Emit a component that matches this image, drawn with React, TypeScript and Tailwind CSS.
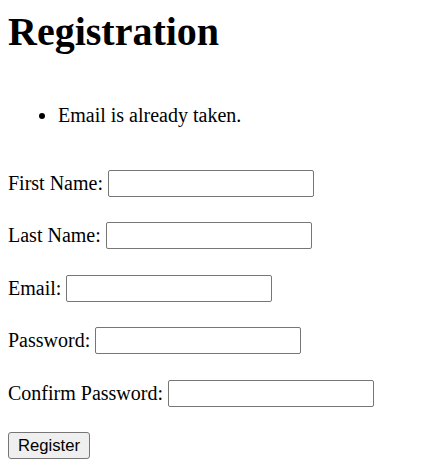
import React from "react";

const serif = { fontFamily: '"Liberation Serif", "Times New Roman", serif' };

function Row({ label, type = "text", mt }: { label: string; type?: string; mt: string }) {
  return (
    <div className={`flex items-center h-[27px] ${mt}`}>
      <label className="text-[20px] leading-[23px] text-black whitespace-pre">{label + " "}</label>
      <input
        type={type}
        className="w-[206px] h-[27px] border border-[#767676] rounded-[2px] bg-white outline-none"
      />
    </div>
  );
}

export default function App() {
  return (
    <div className="px-[8px] bg-white min-h-[476px] text-black" style={serif}>
      <h1 className="pt-[9px] text-[40px] leading-[46px] font-bold m-0">Registration</h1>
      <div className="mt-[49px] flex items-center h-[23px]">
        <span className="ml-[31px] w-[6px] h-[6px] rounded-full bg-black"></span>
        <span className="ml-[13px] text-[20px] leading-[23px]">Email is already taken.</span>
      </div>
      <Row label="First Name:" mt="mt-[43px]" />
      <Row label="Last Name:" mt="mt-[25px]" />
      <Row label="Email:" mt="mt-[26px]" />
      <Row label="Password:" type="password" mt="mt-[25px]" />
      <Row label="Confirm Password:" type="password" mt="mt-[26px]" />
      <div className="mt-[25px]">
        <button
          className="w-[82px] h-[27px] border border-[#767676] rounded-[3px] bg-[#efefef] text-[16.67px] text-black"
          style={{ fontFamily: '"Liberation Sans", Arial, sans-serif' }}
        >
          Register
        </button>
      </div>
    </div>
  );
}
